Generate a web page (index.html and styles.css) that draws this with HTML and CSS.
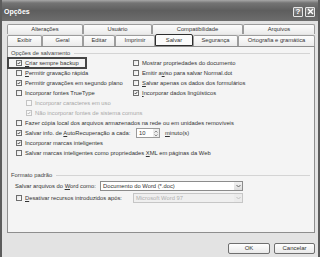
FILE: index.html
```html
<!DOCTYPE html>
<html lang="pt">
<head>
  <meta charset="UTF-8" />
  <title>Opções</title>
  <link rel="stylesheet" href="styles.css">
</head>
<body>
  <div class="window">
    <div class="titlebar">
      <span class="title">Opções</span>
      <div class="caption-buttons">
        <span class="cap-btn">?</span>
        <span class="cap-btn">
          <svg width="7" height="7" viewBox="0 0 7 7"><path d="M1 1 L6 6 M6 1 L1 6" stroke="#fff" stroke-width="1.4"/></svg>
        </span>
      </div>
    </div>

    <div class="tabs">
      <div class="tab-row back">
        <span class="tab">Alterações</span>
        <span class="tab">Usuário</span>
        <span class="tab">Compatibilidade</span>
        <span class="tab">Arquivos</span>
      </div>
      <div class="tab-row front">
        <span class="tab">Exibir</span>
        <span class="tab">Geral</span>
        <span class="tab">Editar</span>
        <span class="tab">Imprimir</span>
        <span class="tab active">Salvar</span>
        <span class="tab">Segurança</span>
        <span class="tab">Ortografia e gramática</span>
      </div>
    </div>

    <div class="panel">
      <div class="group-head"><span>Opções de salvamento</span><i></i></div>

      <div class="options">
        <div class="col">
          <label class="row focused"><span class="cb checked"><svg viewBox="0 0 6 6"><path d="M1 3 L2.4 4.5 L5 1.3"/></svg></span><span><u>C</u>riar sempre backup</span></label>
          <label class="row"><span class="cb"></span><span><u>P</u>ermitir gravação rápida</span></label>
          <label class="row"><span class="cb checked"><svg viewBox="0 0 6 6"><path d="M1 3 L2.4 4.5 L5 1.3"/></svg></span><span>Permitir gravações em segundo plano</span></label>
          <label class="row"><span class="cb"></span><span>Incorporar fontes TrueType</span></label>
          <label class="row sub disabled"><span class="cb"></span><span>Incorporar caracteres em uso</span></label>
          <label class="row sub disabled"><span class="cb checked"><svg viewBox="0 0 6 6"><path d="M1 3 L2.4 4.5 L5 1.3"/></svg></span><span>Não incorporar fontes de sistema comuns</span></label>
        </div>
        <div class="col">
          <label class="row"><span class="cb"></span><span>Mostrar propriedades do documento</span></label>
          <label class="row"><span class="cb"></span><span>Emitir a<u>v</u>iso para salvar Normal.dot</span></label>
          <label class="row"><span class="cb"></span><span><u>S</u>alvar apenas os dados dos formulários</span></label>
          <label class="row"><span class="cb checked"><svg viewBox="0 0 6 6"><path d="M1 3 L2.4 4.5 L5 1.3"/></svg></span><span><u>I</u>ncorporar dados lingüísticos</span></label>
        </div>
      </div>

      <div class="wide">
        <label class="row"><span class="cb"></span><span>Fazer cópia local dos arquivos armazenados na rede ou em unidades removíveis</span></label>
        <div class="row">
          <label class="autosave"><span class="cb checked"><svg viewBox="0 0 6 6"><path d="M1 3 L2.4 4.5 L5 1.3"/></svg></span><span>Salvar info. de <u>A</u>utoRecuperação a cada:</span></label>
          <span class="spin">10<span class="arrows">
            <svg width="4" height="7" viewBox="0 0 4 7"><path d="M0.5 2.5 L2 1 L3.5 2.5 M0.5 4.5 L2 6 L3.5 4.5"/></svg>
          </span></span>
          <span class="unit"><u>m</u>inuto(s)</span>
        </div>
        <label class="row"><span class="cb checked"><svg viewBox="0 0 6 6"><path d="M1 3 L2.4 4.5 L5 1.3"/></svg></span><span>Incorporar marcas inteligentes</span></label>
        <label class="row"><span class="cb"></span><span>Salvar marcas inteligentes como propriedades <u>X</u>ML em páginas da Web</span></label>
      </div>

      <div class="group-head format"><span>Formato padrão</span><i></i></div>

      <div class="format-row">
        <span class="save-as">Salvar arquivos do <u>W</u>ord como:</span>
        <span class="select"><span>Documento do Word (*.doc)</span><span class="drop"><svg width="5" height="4" viewBox="0 0 5 4"><path d="M0.5 1 L2.5 3 L4.5 1"/></svg></span></span>
      </div>
      <div class="format-row second">
        <label class="disable-after"><span class="cb"></span><span><u>D</u>esativar recursos introduzidos após:</span></label>
        <span class="select small disabled"><span>Microsoft Word 97</span><span class="drop"><svg width="5" height="4" viewBox="0 0 5 4"><path d="M0.5 1 L2.5 3 L4.5 1"/></svg></span></span>
      </div>
    </div>

    <div class="buttons">
      <button class="btn ok">OK</button>
      <button class="btn">Cancelar</button>
    </div>
  </div>
</body>
</html>
```

FILE: styles.css
```css
* {
  box-sizing: border-box;
}

html, body {
  margin: 0;
  padding: 0;
}

body {
  width: 320px;
  height: 257px;
  overflow: hidden;
  font-family: "Liberation Sans", Arial, sans-serif;
  font-size: 5.8px;
  color: #333;
  background: #e3e3e3;
}

u {
  text-decoration-thickness: 0.5px;
  text-underline-offset: 1px;
}

.window {
  height: 257px;
  border-left: 2px solid #5c5c5c;
  border-right: 2px solid #5c5c5c;
  background: #e3e3e3;
  display: flex;
  flex-direction: column;
}

/* title bar */
.titlebar {
  height: 21px;
  flex: none;
  display: flex;
  align-items: center;
  justify-content: space-between;
  padding: 2px 3px 0 2px;
  background: linear-gradient(#a8a8a8 0, #747474 3px, #5e5e5e 50%, #6d6d6d 100%);
}

.title {
  color: #fff;
  font-weight: bold;
  font-size: 7px;
}

.caption-buttons {
  display: flex;
  gap: 2px;
}

.cap-btn {
  width: 10px;
  height: 10px;
  border: 1px solid #e6e6e6;
  border-radius: 1px;
  background: linear-gradient(#8e8e8e, #666);
  color: #fff;
  font-weight: bold;
  font-size: 8px;
  display: flex;
  align-items: center;
  justify-content: center;
}

/* tabs */
.tabs {
  margin: 3px 3px 0 5px;
  flex: none;
}

.tab-row {
  display: grid;
}

.tab-row.back {
  height: 10px;
  grid-template-columns: 76px 69px 91px 1fr;
}

.tab-row.front {
  height: 12px;
  grid-template-columns: 35px 41px 32px 40px 38px 45px 1fr;
  align-items: end;
}

.tab {
  height: 10px;
  border: 1px solid #9c9c9c;
  border-bottom: none;
  border-radius: 2px 2px 0 0;
  background: linear-gradient(#fdfdfd, #ebebeb);
  text-align: center;
  line-height: 9px;
  white-space: nowrap;
}

.tab-row.front .tab {
  height: 11px;
}

.tab.active {
  height: 12px !important;
  border: 1px solid #2e2e2e;
  background: #fbfbfb;
  line-height: 10px;
}

/* panel */
.panel {
  height: 187px;
  flex: none;
  margin: 0 3px 0 5px;
  border: 1px solid #8e8e8e;
  background: #f4f4f4;
  padding: 1px 4px 0 3px;
}

.group-head {
  height: 10px;
  display: flex;
  align-items: center;
  color: #444;
}

.group-head i {
  flex: 1;
  height: 0;
  border-top: 1px solid #d4d4d4;
  margin-left: 4px;
}

.group-head.format {
  margin-top: 12px;
}

.options {
  display: grid;
  grid-template-columns: 117px 1fr;
  padding-left: 5px;
}

.row {
  height: 10px;
  display: flex;
  align-items: center;
  white-space: nowrap;
}

.row.sub {
  padding-left: 10px;
}

.row.disabled {
  color: #a8a8a8;
}

.row.focused {
  margin-left: -8px;
  padding-left: 8px;
  width: 78px;
  outline: 2px solid #454545;
  outline-offset: -1px;
}

.cb {
  width: 6px;
  height: 6px;
  flex: none;
  margin-right: 3px;
  border: 1px solid #6e6e6e;
  background: linear-gradient(135deg, #e6e6e6, #fff);
  display: flex;
}

.cb svg {
  width: 4px;
  height: 4px;
  fill: none;
  stroke: #2c2c2c;
  stroke-width: 1.2;
}

.disabled .cb {
  border-color: #c4c4c4;
  background: #f8f8f8;
}

.disabled .cb svg {
  stroke: #a8a8a8;
}

.wide {
  padding-left: 5px;
}

.autosave {
  width: 120px;
  display: flex;
  align-items: center;
}

.spin {
  width: 24px;
  height: 10px;
  border: 1px solid #9a9a9a;
  background: #fff;
  padding-left: 2px;
  line-height: 8px;
  display: flex;
  justify-content: space-between;
}

.arrows {
  width: 6px;
  background: #ececec;
  display: flex;
  align-items: center;
  justify-content: center;
}

.arrows svg {
  fill: none;
  stroke: #777;
  stroke-width: 0.8;
}

.unit {
  margin-left: 5px;
}

/* default format */
.format-row {
  height: 10px;
  margin-top: 1px;
  display: flex;
  align-items: center;
  white-space: nowrap;
}

.format-row.second {
  margin-top: 2px;
  padding-left: 5px;
}

.save-as {
  width: 89px;
  padding-left: 4px;
}

.disable-after {
  width: 117px;
  display: flex;
  align-items: center;
}

.select {
  width: 143px;
  height: 10px;
  border: 1px solid #8c8c8c;
  background: #fff;
  padding-left: 2px;
  line-height: 8px;
  display: flex;
  justify-content: space-between;
}

.select.small {
  width: 110px;
}

.select.disabled {
  border-color: #c6c6c6;
  background: #efefef;
  color: #b0b0b0;
}

.drop {
  width: 8px;
  background: linear-gradient(#f2f2f2, #dcdcdc);
  display: flex;
  align-items: center;
  justify-content: center;
}

.drop svg {
  fill: none;
  stroke: #666;
  stroke-width: 1;
}

.disabled .drop {
  background: #ebebeb;
}

.disabled .drop svg {
  stroke: #c0c0c0;
}

/* buttons */
.buttons {
  margin-top: 10px;
  padding-right: 3px;
  display: flex;
  justify-content: flex-end;
  gap: 4px;
}

.btn {
  width: 41px;
  height: 11px;
  padding: 0;
  border: 1px solid #6f6f6f;
  border-radius: 2px;
  background: linear-gradient(#fff, #e9e9e9);
  font-family: inherit;
  font-size: 6px;
  color: #333;
  line-height: 9px;
}

.btn.ok {
  width: 42px;
}
```
